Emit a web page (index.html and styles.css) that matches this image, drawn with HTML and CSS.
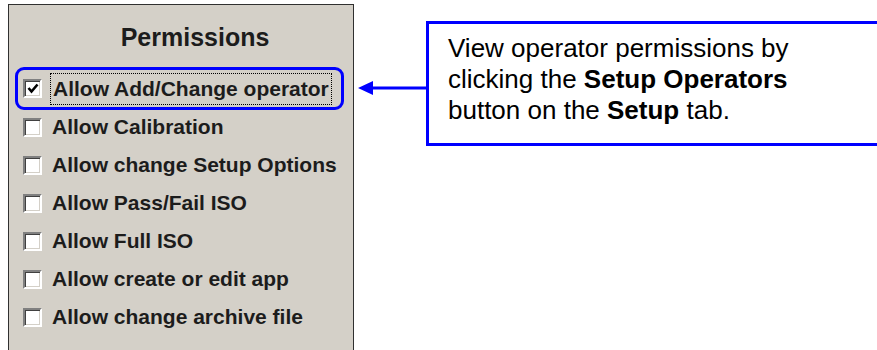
FILE: index.html
```html
<!DOCTYPE html>
<html lang="en">
<head>
    <meta charset="UTF-8">
    <title>Operator Permissions</title>
    <link rel="stylesheet" href="styles.css">
</head>
<body>

<div class="scene">
    <div class="panel">
        <h1 class="panel-title">Permissions</h1>

        <div class="highlight">
            <div class="row">
                <span class="check checked">
                    <svg width="12" height="12" viewBox="0 0 12 12"><path d="M1.5 5 L4.5 8.5 L10.5 1.5" fill="none" stroke="#000" stroke-width="2.6"/></svg>
                </span>
                <span class="label focused">Allow Add/Change operator</span>
            </div>
        </div>

        <div class="row"><span class="check"></span><span class="label">Allow Calibration</span></div>
        <div class="row"><span class="check"></span><span class="label">Allow change Setup Options</span></div>
        <div class="row"><span class="check"></span><span class="label">Allow Pass/Fail ISO</span></div>
        <div class="row"><span class="check"></span><span class="label">Allow Full ISO</span></div>
        <div class="row"><span class="check"></span><span class="label">Allow create or edit app</span></div>
        <div class="row"><span class="check"></span><span class="label">Allow change archive file</span></div>
    </div>

    <div class="pointer">
        <svg width="68" height="16" viewBox="0 0 68 16">
            <path d="M0 8 L15 1 L15 15 Z" fill="#0000ff"/>
            <rect x="12" y="6.5" width="56" height="3" fill="#0000ff"/>
        </svg>
    </div>

    <div class="callout">
        View operator permissions by<br>
        clicking the <b>Setup Operators</b><br>
        button on the <b>Setup</b> tab.
    </div>
</div>

</body>
</html>
```

FILE: styles.css
```css
body {
    margin: 0;
    padding: 0;
    background: #ffffff;
    height: 350px;
    overflow: hidden;
}

.scene {
    display: flex;
    align-items: flex-start;
    padding: 4px 0 0 8px;
}

.panel {
    flex: none;
    width: 344px;
    height: 345px;
    background-color: #d4d0c8;
    border: 1px solid #303030;
    border-bottom: none;
    font-family: 'Liberation Sans', Arial, sans-serif;
    color: #1c1c1c;
}

.panel-title {
    margin: 17px 0 15px 0;
    padding-left: 28px;
    font-size: 25px;
    line-height: 30px;
    font-weight: bold;
    text-align: center;
}

.highlight {
    height: 37px;
    margin: 0 9px -2px 6px;
    border: 3px solid #0000ff;
    border-radius: 9px;
    display: flex;
    align-items: center;
}

.highlight .row {
    height: 37px;
    padding-left: 5px;
}

.row {
    height: 38px;
    display: flex;
    align-items: center;
    padding-left: 14px;
}

.check {
    width: 15px;
    height: 15px;
    flex: none;
    background: #ffffff;
    border: 2px solid;
    border-color: #808080 #ffffff #ffffff #808080;
    box-shadow: inset 1px 1px 0 #404040, inset -1px -1px 0 #d4d0c8;
    display: flex;
    align-items: center;
    justify-content: center;
}

.label {
    margin-left: 10px;
    font-size: 21px;
    font-weight: bold;
    white-space: nowrap;
}

.label.focused {
    margin-left: 8px;
    padding: 3px 2px;
    border: 1px dotted #000000;
    line-height: 24px;
}

.pointer {
    flex: none;
    margin: 76px 0 0 4px;
    width: 68px;
    height: 16px;
}

.pointer svg {
    display: block;
}

.callout {
    flex: 1;
    margin-top: 17px;
    height: 110px;
    border: 3px solid #0000ff;
    border-right: none;
    padding: 9px 0 0 19px;
    font-family: 'Liberation Sans', Arial, sans-serif;
    font-size: 26px;
    line-height: 31px;
    color: #000000;
    white-space: nowrap;
}
```
